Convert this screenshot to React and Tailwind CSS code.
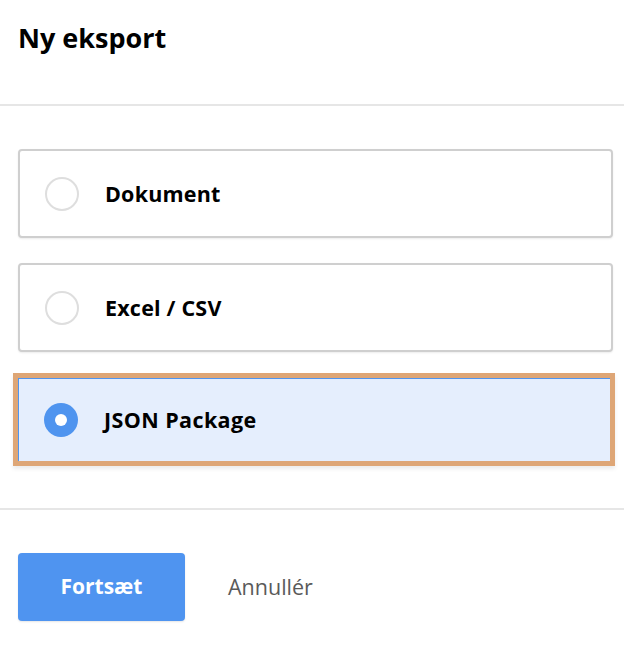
export default function App() {
  const font = { fontFamily: '"Open Sans", "Lato", sans-serif' };
  return (
    <div className="w-[624px] h-[656px] bg-white flex flex-col" style={font}>
      <div className="h-[104px] pl-[18px] pt-[20px]">
        <h1 className="text-[27px] font-bold text-black leading-[36px]">Ny eksport</h1>
      </div>
      <div className="h-[2px] bg-[#e6e6e6]" />
      <div className="pt-[43px] pl-[18px] pr-[11px] flex flex-col">
        <div className="h-[89px] rounded-[4px] border-2 border-[#cfcfcf] bg-white shadow-[0_1px_2px_rgba(0,0,0,0.08)] flex items-center pl-[25px]">
          <div className="w-[34px] h-[34px] rounded-full border-2 border-[#dedede] bg-white" />
          <span className="ml-[26px] text-[21.5px] font-bold text-black leading-none tracking-[0.2px]">Dokument</span>
        </div>
        <div className="mt-[25px] h-[89px] rounded-[4px] border-2 border-[#cfcfcf] bg-white shadow-[0_1px_2px_rgba(0,0,0,0.08)] flex items-center pl-[25px]">
          <div className="w-[34px] h-[34px] rounded-full border-2 border-[#dedede] bg-white" />
          <span className="ml-[26px] text-[21.5px] font-bold text-black leading-none tracking-[0.2px]">Excel / CSV</span>
        </div>
        <div className="mt-[21px] ml-[-5px] mr-[-2px] h-[93px] border-[5px] border-[#dea676] shadow-[0_3px_4px_rgba(0,0,0,0.08)]">
          <div className="h-full border-t border-l border-[#4f94ef] bg-[#e5eefd] flex items-center pl-[25px]">
            <div className="w-[34px] h-[34px] rounded-full bg-[#4f94ef] flex items-center justify-center">
              <div className="w-[12px] h-[12px] rounded-full bg-white" />
            </div>
            <span className="ml-[26px] text-[21.5px] font-bold text-black leading-none tracking-[0.4px]">JSON Package</span>
          </div>
        </div>
      </div>
      <div className="mt-[42px] h-[2px] bg-[#e6e6e6]" />
      <div className="pt-[43px] pl-[18px] flex items-center">
        <button className="w-[167px] h-[68px] rounded-[4px] bg-[#4f94f0] text-white text-[21px] font-bold shadow-[0_1px_2px_rgba(0,0,0,0.1)]">
          Fortsæt
        </button>
        <span className="ml-[43px] text-[21.5px] text-[#5a5a5a]">Annullér</span>
      </div>
    </div>
  );
}
